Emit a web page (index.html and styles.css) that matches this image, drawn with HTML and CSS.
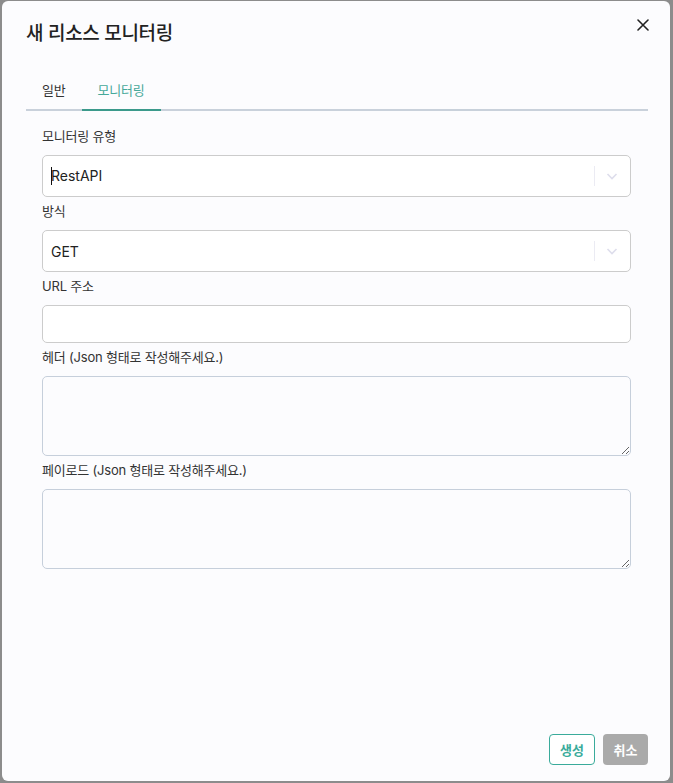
FILE: index.html
```html
<!DOCTYPE html>
<html lang="ko">
<head>
  <meta charset="UTF-8">
  <meta name="viewport" content="width=device-width, initial-scale=1.0">
  <title>새 리소스 모니터링</title>
  <link rel="stylesheet" href="styles.css">
</head>
<body>
  <div class="modal">
    <div class="modal-header">
      <h2 class="modal-title">새 리소스 모니터링</h2>
      <button class="close-btn" aria-label="닫기">
        <svg width="12" height="12" viewBox="0 0 12 12">
          <path d="M1 1 L11 11 M11 1 L1 11" stroke="#222" stroke-width="1.6" stroke-linecap="round"/>
        </svg>
      </button>
    </div>

    <div class="tabs">
      <div class="tab">일반</div>
      <div class="tab active">모니터링</div>
    </div>

    <div class="form">
      <div class="field">
        <label>모니터링 유형</label>
        <div class="select">
          <div class="select-value"><span class="caret"></span>RestAPI</div>
          <div class="select-indicator">
            <span class="sep"></span>
            <svg width="20" height="20" viewBox="0 0 20 20"><path d="M5.5 8 L10 12.5 L14.5 8" fill="none" stroke="#dedeec" stroke-width="1.6"/></svg>
          </div>
        </div>
      </div>
      <div class="field">
        <label>방식</label>
        <div class="select">
          <div class="select-value">GET</div>
          <div class="select-indicator">
            <span class="sep"></span>
            <svg width="20" height="20" viewBox="0 0 20 20"><path d="M5.5 8 L10 12.5 L14.5 8" fill="none" stroke="#dedeec" stroke-width="1.6"/></svg>
          </div>
        </div>
      </div>
      <div class="field">
        <label>URL 주소</label>
        <input class="text-input" type="text">
      </div>
      <div class="field">
        <label>헤더 (Json 형태로 작성해주세요.)</label>
        <textarea class="text-area"></textarea>
      </div>
      <div class="field">
        <label>페이로드 (Json 형태로 작성해주세요.)</label>
        <textarea class="text-area"></textarea>
      </div>
    </div>

    <div class="modal-footer">
      <button class="btn btn-create">생성</button>
      <button class="btn btn-cancel">취소</button>
    </div>
  </div>
</body>
</html>
```

FILE: styles.css
```css
/* backdrop behind the dialog */
body {
  margin: 0;
  background: #8c8c8c;
  font-family: Inter, "Noto Sans CJK KR", sans-serif;
  color: #333;
}
.modal {
  box-sizing: border-box;
  width: 668px;
  height: 780px;
  margin: 1px 0 0 2px;
  padding: 0 22px 16px 24px;
  background: #fcfcfe;
  border-radius: 6px;
  display: flex;
  flex-direction: column;
}
.modal-header {
  display: flex;
  justify-content: space-between;
  align-items: flex-start;
  height: 65px;
}
.modal-title {
  margin: 20px 0 0;
  font-size: 19px;
  font-weight: 500;
  line-height: 26px;
  letter-spacing: -0.3px;
  color: #222;
}
.close-btn {
  border: none;
  background: none;
  padding: 0;
  margin: 18px -1px 0 0;
  width: 12px;
  height: 12px;
  display: flex;
}
/* tabs */
.tabs {
  display: flex;
  border-bottom: 2px solid #c9d1db;
}
.tab {
  padding: 14px 16px 9px;
  font-size: 13px;
  line-height: 20px;
  letter-spacing: -0.2px;
  color: #333;
  margin-bottom: -2px;
  border-bottom: 2px solid transparent;
}
.tab.active {
  color: #46a99a;
  border-bottom-color: #3b9a8b;
}
/* form */
.form {
  padding: 15px 17px 0 16px;
  display: flex;
  flex-direction: column;
  gap: 4px;
}
.field label {
  display: block;
  font-size: 13px;
  line-height: 20px;
  letter-spacing: -0.2px;
  margin-bottom: 9px;
  color: #333;
}
.select {
  box-sizing: border-box;
  height: 42px;
  border: 1px solid #cccccc;
  border-radius: 5px;
  background: #fff;
  display: flex;
  align-items: center;
}
.select-value {
  flex: 1;
  padding-left: 8px;
  font-size: 14px;
  color: #222;
}
.caret {
  display: inline-block;
  width: 1px;
  height: 18px;
  background: #111;
  vertical-align: -4px;
  margin-right: -1px;
}
.select-indicator {
  display: flex;
  align-items: center;
  gap: 7px;
  padding-right: 8px;
}
.sep {
  width: 1px;
  height: 20px;
  background: #ebebf3;
}
.text-input {
  box-sizing: border-box;
  display: block;
  width: 100%;
  height: 38px;
  border: 1px solid #cccccc;
  border-radius: 5px;
  background: #fff;
}
.text-area {
  box-sizing: border-box;
  display: block;
  width: 100%;
  height: 80px;
  border: 1px solid #c6cfdb;
  border-radius: 5px;
  background: #fcfcfe;
  resize: vertical;
}
/* footer buttons */
.modal-footer {
  margin-top: auto;
  display: flex;
  justify-content: flex-end;
  gap: 8px;
}
.btn {
  height: 31px;
  padding: 0 10px;
  border-radius: 4px;
  font-family: inherit;
  font-size: 13px;
  font-weight: 700;
}
.btn-create {
  width: 46px;
  border: 1.5px solid #3aab9b;
  background: #fff;
  color: #3aab9b;
}
.btn-cancel {
  width: 45px;
  border: none;
  background: #aaaaaa;
  color: #fff;
}
```
